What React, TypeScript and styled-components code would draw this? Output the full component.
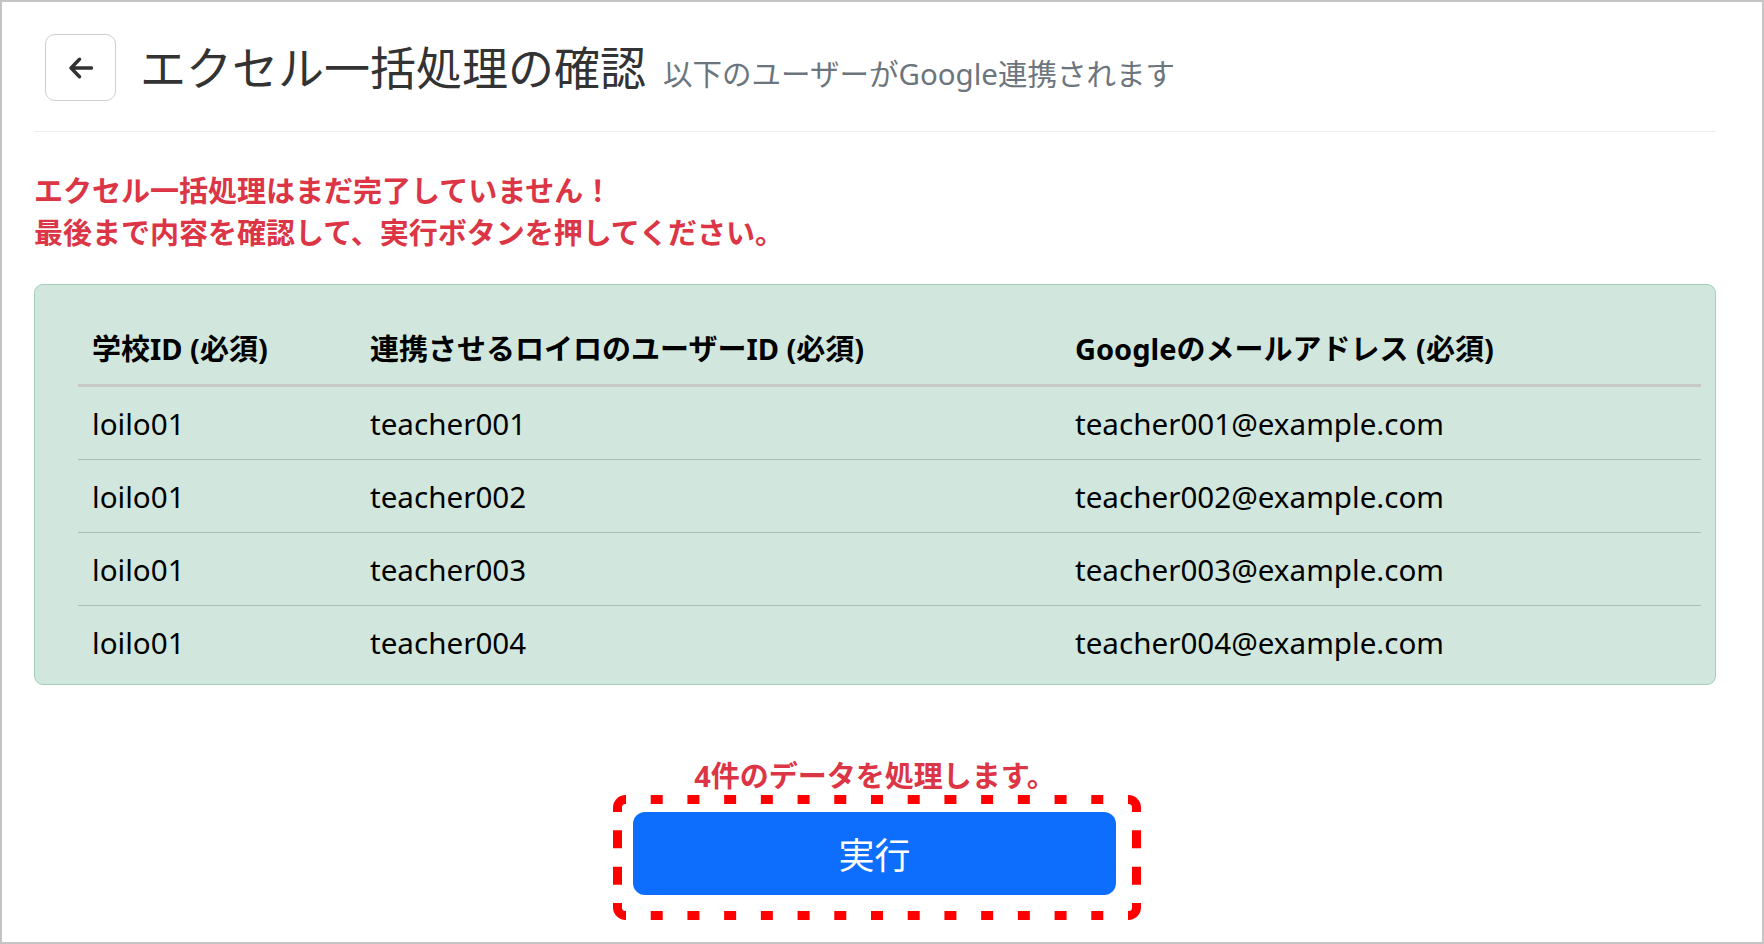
import styled, { createGlobalStyle } from "styled-components";

const GlobalStyle = createGlobalStyle`
  body {
    margin: 0;
    background: #fff;
    font-family: "Noto Sans", "Noto Sans CJK JP", sans-serif;
    color: #212529;
  }
`;

const SPage = styled.div`
  box-sizing: border-box;
  width: 1764px;
  height: 944px;
  border: 2px solid #c4c4c4;
  padding: 32px 46px 0 32px;
  display: flex;
  flex-direction: column;
  overflow: hidden;
`;

const SHeader = styled.header`
  display: flex;
  align-items: center;
  gap: 24px;
  padding: 0 0 30px 11px;
  border-bottom: 1px solid #ebedef;
`;

const SBackButton = styled.button`
  box-sizing: border-box;
  width: 71px;
  height: 67px;
  display: flex;
  align-items: center;
  justify-content: center;
  padding: 0;
  background: #fff;
  border: 1.5px solid #cfcfcf;
  border-radius: 10px;
  cursor: pointer;
`;

const STitleGroup = styled.div`
  display: flex;
  align-items: baseline;
`;

const STitle = styled.h1`
  margin: 0;
  font-size: 46px;
  font-weight: 400;
  line-height: 1.2;
  color: #333;
`;

const SSubTitle = styled.span`
  margin-left: 17px;
  font-size: 29.5px;
  color: #6c757d;
`;

const SAlert = styled.p`
  margin: 38px 0 0;
  font-size: 29px;
  line-height: 42px;
  font-weight: 700;
  color: #dc3545;
`;

const SCard = styled.div`
  margin-top: 30px;
  background: #d1e7dd;
  border: 1.5px solid #a3cfbb;
  border-radius: 9px;
  padding: 27px 14px 6px 43px;
`;

const STable = styled.table`
  width: 100%;
  border-collapse: collapse;
  table-layout: fixed;
  font-size: 29px;
  line-height: 43px;
`;

const SHeadCell = styled.th<{ $width?: string }>`
  width: ${(p) => p.$width ?? "auto"};
  padding: 14.5px 14px;
  text-align: left;
  font-weight: 700;
  color: #000;
  border-bottom: 3px solid #c8c8c8;
`;

const SRow = styled.tr`
  & + & td {
    border-top: 1px solid #a9bdb3;
  }
`;

const SCell = styled.td`
  padding: 14.5px 14px;
  font-size: 29.6px;
  color: #000;
`;

const SFooter = styled.div`
  margin-top: 73px;
  display: flex;
  flex-direction: column;
  align-items: center;
`;

const SCount = styled.p`
  margin: 0;
  font-size: 29px;
  line-height: 36px;
  font-weight: 700;
  color: #dc3545;
`;

const SHighlight = styled.div`
  position: relative;
  margin: 1px 0 0 4px;
  padding: 17px 25px 25px 20px;
`;

const SOutline = styled.svg`
  position: absolute;
  left: 0;
  top: 0;
  width: 100%;
  height: 100%;
  pointer-events: none;
`;

const SRunButton = styled.button`
  display: block;
  width: 483px;
  height: 83px;
  border: 0;
  border-radius: 12px;
  background: #0d6efd;
  color: #fff;
  font-family: inherit;
  font-size: 36px;
  cursor: pointer;
`;

const rows = ["001", "002", "003", "004"].map((n) => ({
  school: "loilo01",
  user: `teacher${n}`,
  mail: `teacher${n}@example.com`,
}));

// dashed annotation frame round the run button
const W = 528;
const H = 125;
const SW = 9;
const h = SW / 2;
const R = 8;

const dashPath = () => {
  const parts: string[] = [];
  // corners
  parts.push(`M${h} 17V${h + R}A${R} ${R} 0 0 1 ${h + R} ${h}H13`);
  parts.push(`M${W - 13} ${h}H${W - h - R}A${R} ${R} 0 0 1 ${W - h} ${h + R}V17`);
  parts.push(`M${W - h} ${H - 17}V${H - h - R}A${R} ${R} 0 0 1 ${W - h - R} ${H - h}H${W - 13}`);
  parts.push(`M13 ${H - h}H${h + R}A${R} ${R} 0 0 1 ${h} ${H - h - R}V${H - 17}`);
  // top / bottom
  const hg = (W - 26 - 13 * 12) / 14;
  for (let k = 0; k < 13; k++) {
    const x = 13 + hg + k * (12 + hg);
    parts.push(`M${x} ${h}h12`);
    parts.push(`M${x} ${H - h}h12`);
  }
  // left / right
  const vg = (H - 34 - 2 * 18) / 3;
  for (let k = 0; k < 2; k++) {
    const y = 17 + vg + k * (18 + vg);
    parts.push(`M${h} ${y}v18`);
    parts.push(`M${W - h} ${y}v18`);
  }
  return parts.join("");
};

const App = () => {
  return (
    <>
      <GlobalStyle />
      <SPage>
        <SHeader>
          <SBackButton aria-label="戻る">
            <svg width="24" height="22" viewBox="0 0 24 22">
              <path
                d="M2 11H22.5M10.5 2.2L2 11l8.5 8.8"
                fill="none"
                stroke="#333"
                strokeWidth="3.4"
                strokeLinecap="round"
                strokeLinejoin="round"
              />
            </svg>
          </SBackButton>
          <STitleGroup>
            <STitle>エクセル一括処理の確認</STitle>
            <SSubTitle>以下のユーザーがGoogle連携されます</SSubTitle>
          </STitleGroup>
        </SHeader>

        <SAlert>
          エクセル一括処理はまだ完了していません！
          <br />
          最後まで内容を確認して、実行ボタンを押してください。
        </SAlert>

        <SCard>
          <STable>
            <thead>
              <tr>
                <SHeadCell $width="250px">学校ID (必須)</SHeadCell>
                <SHeadCell $width="677px">連携させるロイロのユーザーID (必須)</SHeadCell>
                <SHeadCell>Googleのメールアドレス (必須)</SHeadCell>
              </tr>
            </thead>
            <tbody>
              {rows.map((r) => (
                <SRow key={r.user}>
                  <SCell>{r.school}</SCell>
                  <SCell>{r.user}</SCell>
                  <SCell>{r.mail}</SCell>
                </SRow>
              ))}
            </tbody>
          </STable>
        </SCard>

        <SFooter>
          <SCount>{rows.length}件のデータを処理します。</SCount>
          <SHighlight>
            <SOutline viewBox={`0 0 ${W} ${H}`}>
              <path d={dashPath()} fill="none" stroke="#ff0000" strokeWidth={SW} strokeLinecap="butt" />
            </SOutline>
            <SRunButton>実行</SRunButton>
          </SHighlight>
        </SFooter>
      </SPage>
    </>
  );
};

export default App;
